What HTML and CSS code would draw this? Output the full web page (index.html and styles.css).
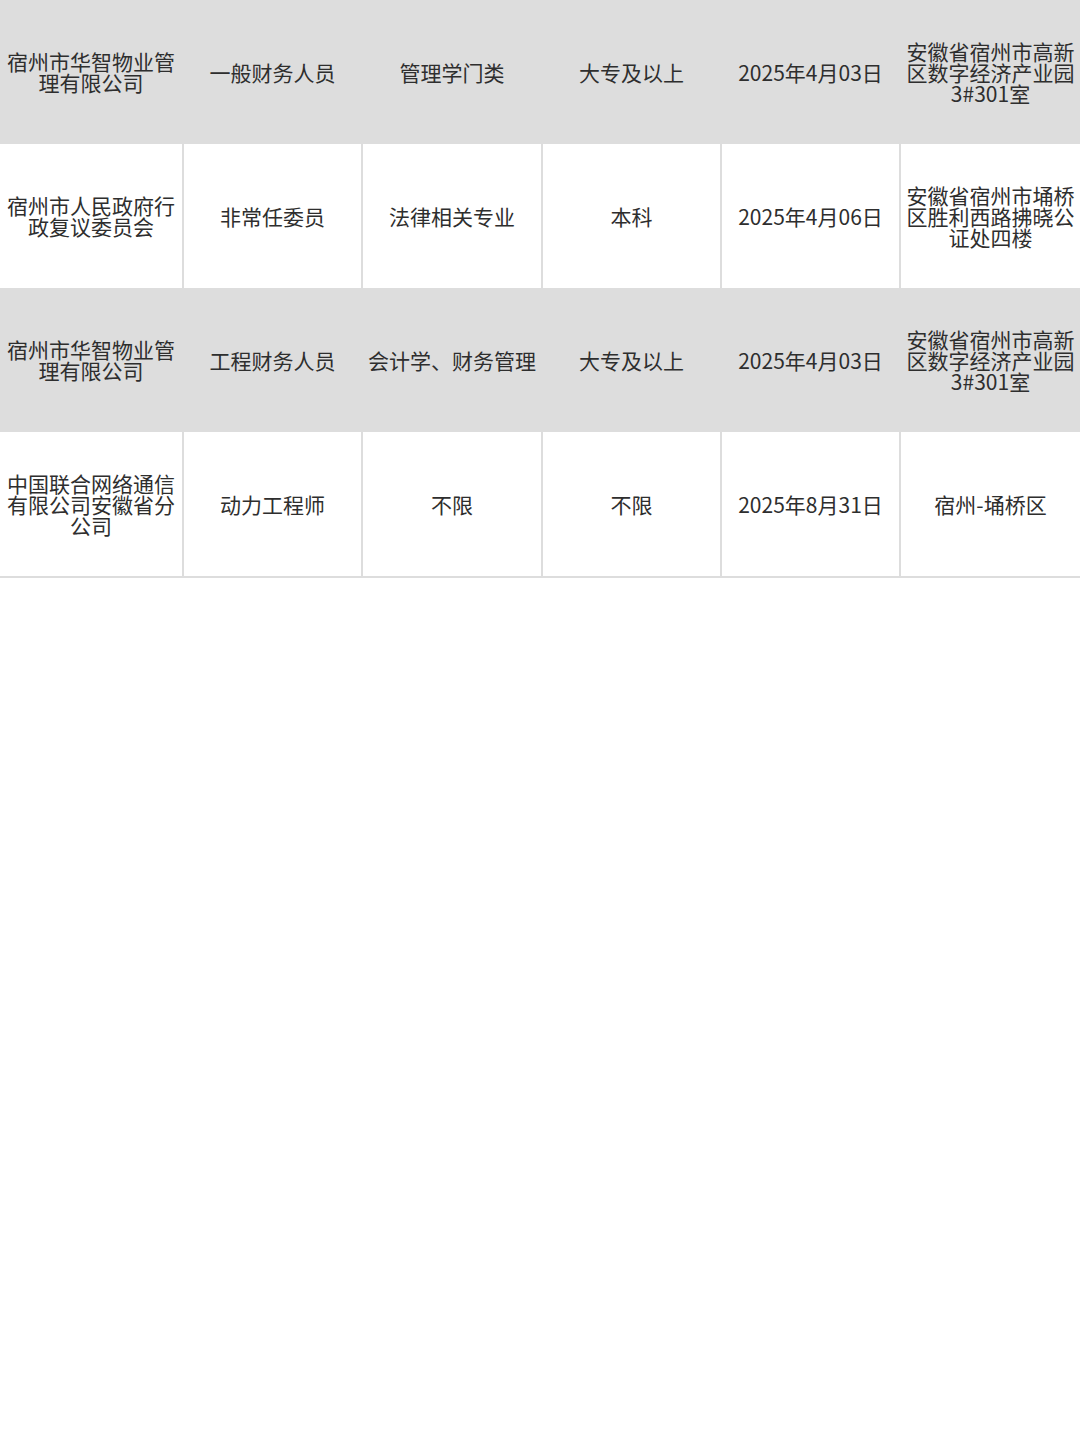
FILE: index.html
```html
<!DOCTYPE html>
<html lang="zh-CN">
<head>
<meta charset="utf-8">
<title>招聘信息</title>
<link rel="stylesheet" href="styles.css">
</head>
<body>
<div class="table">
  <div class="row shaded">
    <div class="cell">宿州市华智物业管理有限公司</div>
    <div class="cell">一般财务人员</div>
    <div class="cell">管理学门类</div>
    <div class="cell">大专及以上</div>
    <div class="cell">2025年4月03日</div>
    <div class="cell">安徽省宿州市高新区数字经济产业园3#301室</div>
  </div>
  <div class="row">
    <div class="cell">宿州市人民政府行政复议委员会</div>
    <div class="cell">非常任委员</div>
    <div class="cell">法律相关专业</div>
    <div class="cell">本科</div>
    <div class="cell">2025年4月06日</div>
    <div class="cell">安徽省宿州市埇桥区胜利西路拂晓公证处四楼</div>
  </div>
  <div class="row shaded">
    <div class="cell">宿州市华智物业管理有限公司</div>
    <div class="cell">工程财务人员</div>
    <div class="cell">会计学、财务管理</div>
    <div class="cell">大专及以上</div>
    <div class="cell">2025年4月03日</div>
    <div class="cell">安徽省宿州市高新区数字经济产业园3#301室</div>
  </div>
  <div class="row">
    <div class="cell">中国联合网络通信有限公司安徽省分公司</div>
    <div class="cell">动力工程师</div>
    <div class="cell">不限</div>
    <div class="cell">不限</div>
    <div class="cell">2025年8月31日</div>
    <div class="cell">宿州-埇桥区</div>
  </div>
</div>
</body>
</html>
```
FILE: styles.css
```css
html, body {
  margin: 0;
  padding: 0;
  background: #ffffff;
}

body {
  font-family: "Noto Sans CJK SC", "Noto Sans", sans-serif;
  color: #2e2e2e;
  width: 1080px;
  height: 1444px;
}

.table {
  display: flex;
  flex-direction: column;
  width: 1080px;
}

.row {
  display: grid;
  grid-template-columns: 182px 179px 180px 179px 179px 181px;
  height: 144px;
  background: #ffffff;
}

.row:last-child {
  border-bottom: 2px solid #dddddd;
}

.row.shaded {
  background: #dddddd;
}

.cell {
  display: flex;
  align-items: center;
  justify-content: center;
  text-align: center;
  box-sizing: border-box;
  padding: 0 4px;
  font-size: 21px;
  line-height: 21px;
  border-left: 2px solid #dddddd;
}

.cell:first-child {
  border-left: none;
}
```
